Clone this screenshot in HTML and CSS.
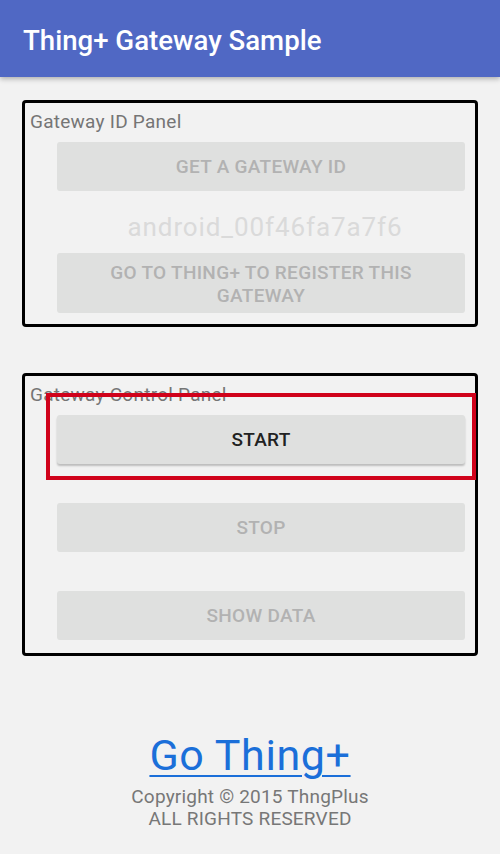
FILE: index.html
```html
<!DOCTYPE html>
<html>
<head>
<meta charset="utf-8">
<link rel="stylesheet" href="styles.css">
</head>
<body>
<header class="appbar">Thing+ Gateway Sample</header>
<main class="content">
  <section class="panel">
    <div class="panel-label">Gateway ID Panel</div>
    <div class="btn disabled">GET A GATEWAY ID</div>
    <div class="gateway-id">android_00f46fa7a7f6</div>
    <div class="btn disabled two-line">GO TO THING+ TO REGISTER THIS<br>GATEWAY</div>
  </section>
  <section class="panel panel-control">
    <div class="panel-label">Gateway Control Panel</div>
    <div class="btn active">START</div>
    <div class="btn disabled spaced">STOP</div>
    <div class="btn disabled spaced">SHOW DATA</div>
  </section>
  <footer class="footer">
    <a class="link" href="#">Go Thing+</a>
    <div class="copy">Copyright © 2015 ThngPlus<br>ALL RIGHTS RESERVED</div>
  </footer>
</main>
<div class="highlight"></div>
</body>
</html>
```
FILE: styles.css
```css
html, body {
  margin: 0;
  padding: 0;
}
body {
  background: #f2f2f2;
  font-family: Roboto, "Liberation Sans", sans-serif;
  width: 500px;
  height: 854px;
  overflow: hidden;
  position: relative;
}
.appbar {
  position: relative;
  z-index: 2;
  height: 77px;
  box-sizing: border-box;
  padding: 4px 0 0 23px;
  display: flex;
  align-items: center;
  background: #5068c4;
  color: #ffffff;
  font-size: 27.6px;
  font-weight: 500;
  box-shadow: 0 2px 5px rgba(0, 0, 0, 0.28);
}
.content {
  padding: 23px 22px 0 22px;
}
.panel {
  border: 3px solid #000;
  border-radius: 4px;
  padding: 8px 10px 11px 5px;
}
.panel-control {
  margin-top: 46px;
  padding-bottom: 13px;
}
.panel-label {
  font-size: 19px;
  letter-spacing: 0.25px;
  line-height: 21px;
  color: #757575;
  margin-bottom: 10px;
}
.btn {
  margin-left: 27px;
  height: 49px;
  background: #dfe0df;
  border-radius: 3px;
  display: flex;
  align-items: center;
  justify-content: center;
  font-size: 19px;
  letter-spacing: 0.3px;
  font-weight: 500;
  line-height: 21px;
  text-align: center;
}
.btn.disabled {
  color: #b2b2b2;
}
.btn.active {
  color: #222222;
  box-shadow: 0 2px 2px rgba(0, 0, 0, 0.22);
}
.btn.spaced {
  margin-top: 39px;
}
.btn.two-line {
  height: 60px;
  box-sizing: border-box;
  padding: 8px 0 6px;
  line-height: 23px;
}
.gateway-id {
  margin-left: 27px;
  height: 62px;
  box-sizing: border-box;
  padding-top: 10px;
  padding-left: 8px;
  line-height: 52px;
  text-align: center;
  font-size: 26px;
  letter-spacing: 0.9px;
  color: #dadada;
}
.footer {
  margin-top: 75px;
  text-align: center;
}
.link {
  display: inline-block;
  font-size: 43px;
  letter-spacing: 0.6px;
  line-height: 49px;
  color: #1b6fd9;
  text-decoration: underline;
  text-decoration-thickness: 2px;
  text-underline-offset: 5px;
}
.copy {
  margin-top: 6px;
  font-size: 19px;
  letter-spacing: 0.2px;
  line-height: 22px;
  color: #777777;
}
.highlight {
  position: absolute;
  left: 46px;
  top: 393px;
  width: 430px;
  height: 87px;
  box-sizing: border-box;
  border: 4px solid #d0021b;
  z-index: 3;
}
```
